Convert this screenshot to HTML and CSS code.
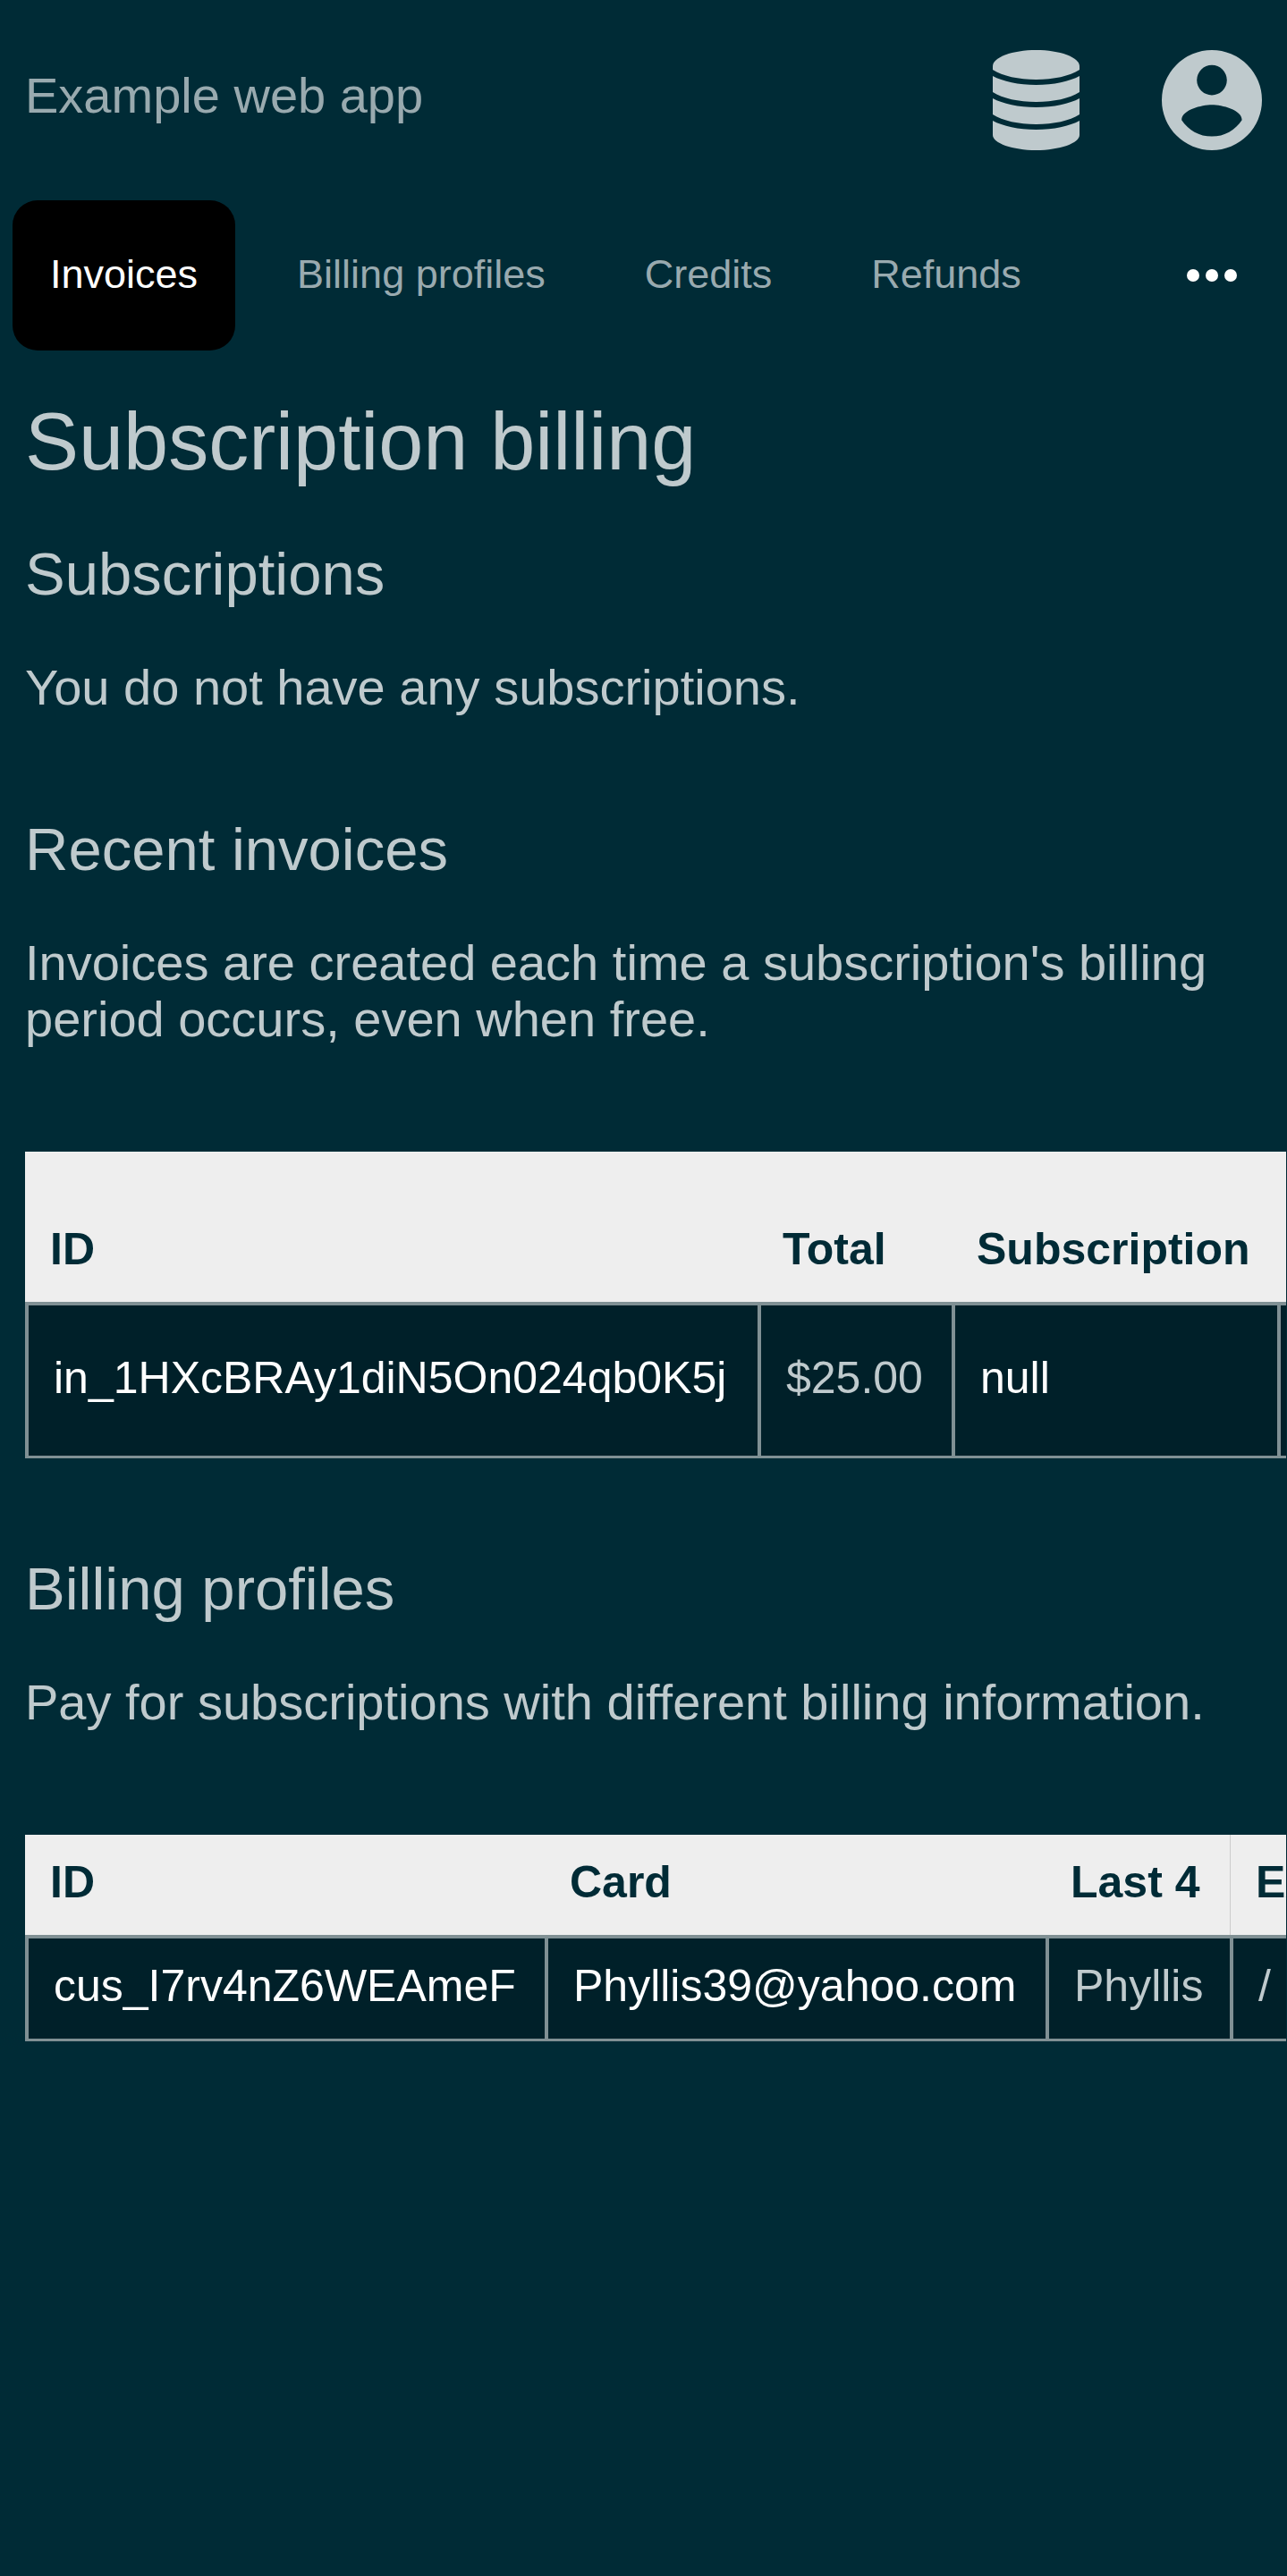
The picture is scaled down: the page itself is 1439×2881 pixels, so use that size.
FILE: index.html
```html
<!DOCTYPE html>
<html lang="en">
<head>
<meta charset="utf-8">
<title>Subscription billing</title>
<link rel="stylesheet" href="styles.css">
</head>
<body>
<header class="header">
  <a class="brand" href="#">Example web app</a>
  <div class="menus">
    <button class="icon-button" type="button" aria-label="Administration">
      <svg viewBox="0 0 112 112" fill="currentColor">
        <path d="M7 18C7 8 29 0 55.500 0S104 8 104 18V22C93 29 75 33 55.500 33S18 29 7 22Z"/>
        <path d="M7 29C18 35 36 39 55.500 39S93 35 104 29V47C93 54 75 58 55.500 58S18 54 7 47Z"/>
        <path d="M7 54C18 60 36 64 55.500 64S93 60 104 54V72C93 79 75 83 55.500 83S18 79 7 72Z"/>
        <path d="M7 79C18 85 36 89 55.500 89S93 85 104 79V95C104 104 82 112 55.500 112S7 104 7 95Z"/>
      </svg>
    </button>
    <button class="icon-button" type="button" aria-label="Account">
      <svg viewBox="0 0 24 24" fill="currentColor">
        <path fill-rule="evenodd" d="M12 0a12 12 0 1 0 0 24 12 12 0 0 0 0-24zM12 3.600a3.600 3.600 0 1 1 0 7.200 3.600 3.600 0 0 1 0-7.200zM12 20.700C9 20.700 6.300 19.150 4.750 16.750c.04-2.400 4.800-3.600 7.250-3.600s7.160 1.200 7.200 3.600C17.650 19.150 15 20.700 12 20.700z"/>
      </svg>
    </button>
  </div>
</header>
<nav class="nav">
  <a class="nav-link nav-link-current" href="#">Invoices</a>
  <a class="nav-link" href="#">Billing profiles</a>
  <a class="nav-link" href="#">Credits</a>
  <a class="nav-link" href="#">Refunds</a>
  <button class="more" type="button" aria-label="More">
    <svg viewBox="0 0 56 14" fill="currentColor"><circle cx="7" cy="7" r="7"/><circle cx="28" cy="7" r="7"/><circle cx="49" cy="7" r="7"/></svg>
  </button>
</nav>
<main class="content">
  <h1>Subscription billing</h1>
  <section>
    <h2>Subscriptions</h2>
    <p>You do not have any subscriptions.</p>
  </section>
  <section>
    <h2>Recent invoices</h2>
    <p>Invoices are created each time a subscription's billing period occurs, even when free.</p>
    <div class="table-scroll">
      <table class="data invoices">
        <colgroup><col class="col-invoice"><col class="col-total"><col class="col-subscription"><col class="col-rest"></colgroup>
        <thead><tr><th>ID</th><th>Total</th><th>Subscription</th><th></th></tr></thead>
        <tbody><tr><td><a href="#">in_1HXcBRAy1diN5On024qb0K5j</a></td><td>$25.00</td><td><a href="#">null</a></td><td></td></tr></tbody>
      </table>
    </div>
  </section>
  <section>
    <h2>Billing profiles</h2>
    <p>Pay for subscriptions with different billing information.</p>
    <div class="table-scroll">
      <table class="data profiles">
        <colgroup><col class="col-profile"><col class="col-card"><col class="col-last"><col class="col-rest"></colgroup>
        <thead><tr><th>ID</th><th>Card</th><th>Last 4</th><th class="seam">Expires</th></tr></thead>
        <tbody><tr><td><a href="#">cus_I7rv4nZ6WEAmeF</a></td><td><a href="#">Phyllis39@yahoo.com</a></td><td>Phyllis</td><td>/</td></tr></tbody>
      </table>
    </div>
  </section>
</main>
</body>
</html>
```
FILE: styles.css
```css
* { box-sizing: border-box; }
body {
  margin: 0;
  background: #002b36;
  color: #bfcacd;
  font: 56px/63px "Liberation Sans", Arial, sans-serif;
}
a { color: inherit; text-decoration: none; }
button { border: 0; padding: 0; background: none; color: inherit; }
svg { display: block; width: 100%; }

.header {
  display: flex;
  align-items: center;
  justify-content: space-between;
  padding: 56px 28px;
}
.brand { padding-bottom: 12px; color: #99aaaf; }
.menus { display: flex; gap: 84px; }
.icon-button { width: 112px; height: 112px; }

.nav {
  display: flex;
  align-items: center;
  gap: 27px;
  padding: 0 56px 0 14px;
}
.nav-link {
  padding: 57px 42px 59px;
  border-radius: 28px;
  color: #99aaaf;
  font-size: 45px;
  line-height: 52px;
}
.nav-link-current { background: #000; color: #fff; }
.more { width: 56px; margin-left: auto; color: #fff; }

.content { padding: 52px 1px 56px 28px; }
h1, h2, p { margin: 0; font-weight: normal; }
h1 { margin-bottom: 60px; font-size: 90px; line-height: 100px; }
h2 { margin-bottom: 57px; font-size: 67px; line-height: 76px; }
section { margin-bottom: 112px; }

.table-scroll {
  margin-top: 117px;
  margin-bottom: -4px;
  overflow-x: auto;
  scrollbar-width: none;
}
.data {
  width: 1600px;
  table-layout: fixed;
  border-collapse: separate;
  border-spacing: 0;
  font-size: 50px;
  line-height: 56px;
}
.data th,
.data td { padding: 25px 28px 31px; }
.data th {
  background: #eee;
  color: #002b36;
  text-align: left;
  vertical-align: bottom;
}
.data td {
  border: solid rgba(255, 255, 255, 0.5);
  border-width: 4px 0 3px 4px;
  background: #002029;
  white-space: nowrap;
}
.data td a { color: #fff; }
.invoices th { height: 168px; }
.invoices td { height: 175px; }
.data .seam { border-left: 1px solid #ccc; }
.col-invoice { width: 819px; }
.col-total { width: 217px; }
.col-subscription { width: 364px; }
.col-profile { width: 581px; }
.col-card { width: 560px; }
.col-last { width: 206px; }
.col-rest { width: auto; }
```
